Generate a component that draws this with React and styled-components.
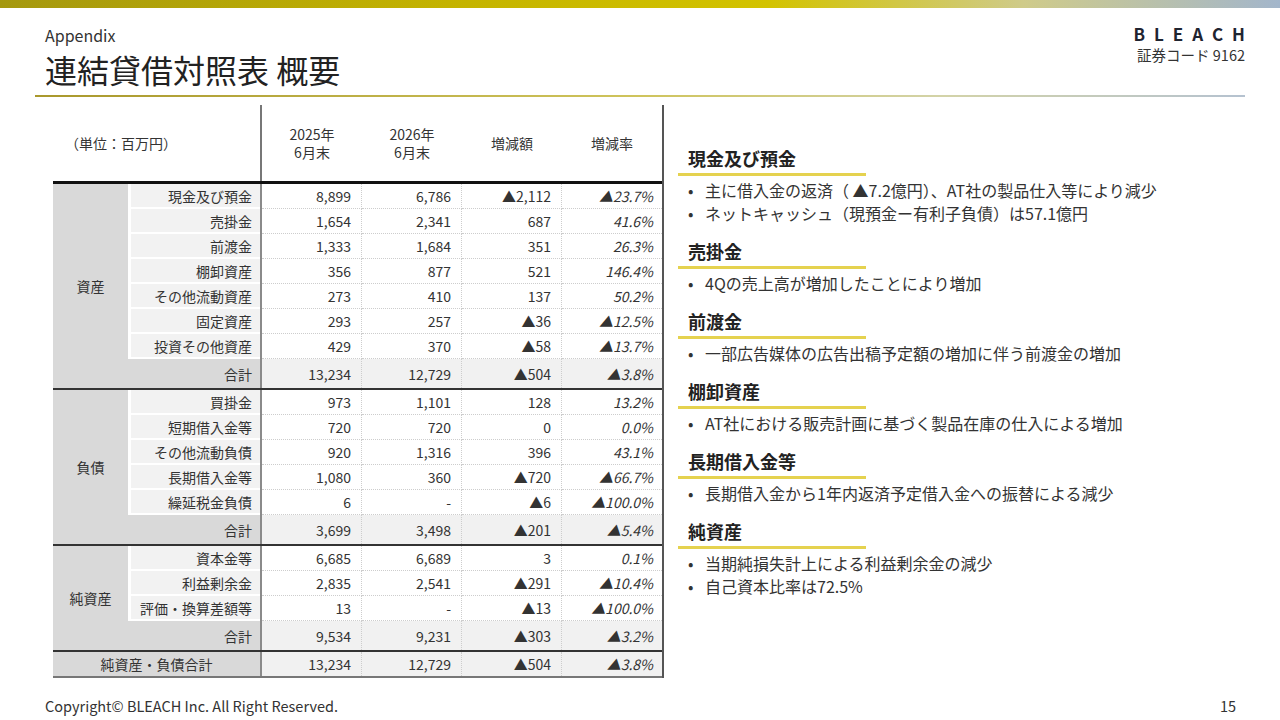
import React from 'react';
import styled, { createGlobalStyle } from 'styled-components';

const GlobalStyle = createGlobalStyle`
  * { box-sizing: border-box; }
  body {
    margin: 0;
    background: #fff;
    font-family: "Noto Sans CJK JP", "Noto Sans", sans-serif;
    color: #333;
  }
`;

const Page = styled.div`
  width: 1280px;
  height: 720px;
  display: flex;
  flex-direction: column;
  overflow: hidden;
`;

const TopBar = styled.div`
  height: 8px;
  background: linear-gradient(90deg, #a5980f 0%, #c4b300 35%, #d3c300 60%, #cfcb8a 80%, #a3b6cb 100%);
`;

const Header = styled.header`
  display: flex;
  justify-content: space-between;
  padding: 17px 35px 0 45px;
`;

const TitleBlock = styled.div`
  display: flex;
  flex-direction: column;
`;

const Kicker = styled.div`
  font-size: 16px;
  line-height: 20px;
  color: #333;
`;

const Title = styled.h1`
  margin: 4px 0 0;
  font-size: 32px;
  font-weight: 400;
  line-height: 40px;
  color: #222;
`;

const Brand = styled.div`
  display: flex;
  flex-direction: column;
  align-items: flex-end;
  margin-top: -2px;
`;

const Logo = styled.div`
  font-size: 17px;
  font-weight: 700;
  letter-spacing: 9px;
  margin-right: -9px;
  line-height: 22px;
  color: #1f2430;
`;

const Code = styled.div`
  font-size: 14.5px;
  line-height: 20px;
  color: #333;
`;

const Divider = styled.div`
  margin: 6px 35px 0;
  height: 2px;
  background: linear-gradient(90deg, #a9982c 0%, #cfc45c 50%, #d3d3a8 75%, #b5c2d0 100%);
`;

const Main = styled.main`
  flex: 1;
  display: flex;
  padding: 8px 0 0 53px;
`;

const Table = styled.div`
  width: 611px;
  align-self: flex-start;
  border-right: 2px solid #555;
`;

const cols = '75px 134px repeat(4, 100px)';

const HeadRow = styled.div`
  display: grid;
  grid-template-columns: ${cols};
  height: 79px;
  border-bottom: 3px solid #111;
`;

const UnitCell = styled.div`
  grid-column: 1 / span 2;
  display: flex;
  align-items: center;
  padding-left: 12px;
  font-size: 14px;
  border-right: 2px solid #777;
`;

const HeadCell = styled.div`
  display: flex;
  align-items: center;
  justify-content: center;
  text-align: center;
  font-size: 14px;
  line-height: 18px;
`;

const Block = styled.div`
  display: grid;
  grid-template-columns: ${cols};
  grid-template-rows: repeat(${p => p.$rows}, 25px) 29px;
  border-top: ${p => (p.$first ? 'none' : '2px solid #333')};
`;

const GroupCell = styled.div`
  grid-column: 1;
  grid-row: 1 / -1;
  background: #d9d9d9;
  display: flex;
  align-items: center;
  justify-content: center;
  font-size: 14px;
`;

const LabelCell = styled.div`
  grid-column: 2;
  padding: ${p => (p.$sum ? '0' : '0 0 2px 3px')};
  background: ${p => (p.$sum ? '#d9d9d9' : '#fff')};
  border-right: 2px solid #8a8a8a;
`;

const LabelFill = styled.div`
  height: 100%;
  display: flex;
  align-items: center;
  justify-content: flex-end;
  padding-right: 8px;
  background: ${p => (p.$sum ? '#d9d9d9' : '#f2f2f2')};
  font-size: 14px;
  white-space: nowrap;
`;

const DataCell = styled.div`
  display: flex;
  align-items: center;
  justify-content: flex-end;
  padding-right: ${p => (p.$last ? '9px' : '10px')};
  font-size: 14px;
  font-style: ${p => (p.$italic ? 'italic' : 'normal')};
  background: ${p => (p.$sum ? '#f1f1f1' : '#fff')};
  border-bottom: ${p => (p.$sum ? 'none' : '1px dotted #cdcdcd')};
  border-right: ${p => (p.$last ? 'none' : '1px dotted #cdcdcd')};
  white-space: nowrap;
`;

const TotalRow = styled.div`
  display: grid;
  grid-template-columns: ${cols};
  height: 28px;
  border-top: 2px solid #333;
  border-bottom: 2px solid #777;
`;

const TotalLabel = styled.div`
  grid-column: 1 / span 2;
  background: #d9d9d9;
  display: flex;
  align-items: center;
  justify-content: center;
  font-size: 14px;
  border-right: 2px solid #8a8a8a;
`;

const Notes = styled.section`
  margin-left: 14px;
  padding-top: 41px;
  display: flex;
  flex-direction: column;
`;

const Note = styled.div`
  margin-bottom: 14px;
`;

const NoteTitle = styled.h2`
  margin: 0;
  width: 188px;
  padding: 0 0 3px 10px;
  border-bottom: 3px solid #e5d24f;
  font-size: 18px;
  line-height: 24px;
  font-weight: 700;
  color: #222;
`;

const NoteList = styled.ul`
  list-style: none;
  margin: 3px 0 0;
  padding: 0;
`;

const NoteItem = styled.li`
  display: flex;
  font-size: 16px;
  line-height: 23px;
  color: #333;
  white-space: nowrap;
`;

const Dot = styled.span`
  width: 27px;
  padding-left: 10px;
  flex-shrink: 0;
`;

const Footer = styled.footer`
  height: 28px;
  display: flex;
  align-items: center;
  justify-content: space-between;
  padding: 0 44px 2px 45px;
  font-size: 14.5px;
  color: #333;
`;

const sections = [
  {
    group: '資産',
    rows: [
      ['現金及び預金', '8,899', '6,786', '▲2,112', '▲23.7%'],
      ['売掛金', '1,654', '2,341', '687', '41.6%'],
      ['前渡金', '1,333', '1,684', '351', '26.3%'],
      ['棚卸資産', '356', '877', '521', '146.4%'],
      ['その他流動資産', '273', '410', '137', '50.2%'],
      ['固定資産', '293', '257', '▲36', '▲12.5%'],
      ['投資その他資産', '429', '370', '▲58', '▲13.7%'],
    ],
    sum: ['13,234', '12,729', '▲504', '▲3.8%'],
  },
  {
    group: '負債',
    rows: [
      ['買掛金', '973', '1,101', '128', '13.2%'],
      ['短期借入金等', '720', '720', '0', '0.0%'],
      ['その他流動負債', '920', '1,316', '396', '43.1%'],
      ['長期借入金等', '1,080', '360', '▲720', '▲66.7%'],
      ['繰延税金負債', '6', '-', '▲6', '▲100.0%'],
    ],
    sum: ['3,699', '3,498', '▲201', '▲5.4%'],
  },
  {
    group: '純資産',
    rows: [
      ['資本金等', '6,685', '6,689', '3', '0.1%'],
      ['利益剰余金', '2,835', '2,541', '▲291', '▲10.4%'],
      ['評価・換算差額等', '13', '-', '▲13', '▲100.0%'],
    ],
    sum: ['9,534', '9,231', '▲303', '▲3.2%'],
  },
];

const notes = [
  {
    title: '現金及び預金',
    items: [
      '主に借入金の返済（ ▲7.2億円）、AT社の製品仕入等により減少',
      'ネットキャッシュ（現預金ー有利子負債）は57.1億円',
    ],
  },
  { title: '売掛金', items: ['4Qの売上高が増加したことにより増加'] },
  { title: '前渡金', items: ['一部広告媒体の広告出稿予定額の増加に伴う前渡金の増加'] },
  { title: '棚卸資産', items: ['AT社における販売計画に基づく製品在庫の仕入による増加'] },
  { title: '長期借入金等', items: ['長期借入金から1年内返済予定借入金への振替による減少'] },
  { title: '純資産', items: ['当期純損失計上による利益剰余金の減少', '自己資本比率は72.5%'] },
];

const Values = ({ values, sum }) =>
  values.map((v, i) => (
    <DataCell key={i} $sum={sum} $italic={i === 3} $last={i === 3}>
      {v}
    </DataCell>
  ));

const App = () => (
  <Page>
    <GlobalStyle />
    <TopBar />
    <Header>
      <TitleBlock>
        <Kicker>Appendix</Kicker>
        <Title>連結貸借対照表 概要</Title>
      </TitleBlock>
      <Brand>
        <Logo>BLEACH</Logo>
        <Code>証券コード 9162</Code>
      </Brand>
    </Header>
    <Divider />

    <Main>
      <Table>
        <HeadRow>
          <UnitCell>（単位：百万円）</UnitCell>
          <HeadCell>2025年<br />6月末</HeadCell>
          <HeadCell>2026年<br />6月末</HeadCell>
          <HeadCell>増減額</HeadCell>
          <HeadCell>増減率</HeadCell>
        </HeadRow>

        {sections.map((s, si) => (
          <Block key={s.group} $rows={s.rows.length} $first={si === 0}>
            <GroupCell>{s.group}</GroupCell>
            {s.rows.map(([label, ...vals]) => (
              <React.Fragment key={label}>
                <LabelCell>
                  <LabelFill>{label}</LabelFill>
                </LabelCell>
                <Values values={vals} />
              </React.Fragment>
            ))}
            <LabelCell $sum>
              <LabelFill $sum>合計</LabelFill>
            </LabelCell>
            <Values values={s.sum} sum />
          </Block>
        ))}

        <TotalRow>
          <TotalLabel>純資産・負債合計</TotalLabel>
          <Values values={['13,234', '12,729', '▲504', '▲3.8%']} sum />
        </TotalRow>
      </Table>

      <Notes>
        {notes.map(n => (
          <Note key={n.title}>
            <NoteTitle>{n.title}</NoteTitle>
            <NoteList>
              {n.items.map(t => (
                <NoteItem key={t}>
                  <Dot>•</Dot>
                  {t}
                </NoteItem>
              ))}
            </NoteList>
          </Note>
        ))}
      </Notes>
    </Main>

    <Footer>
      <span>Copyright© BLEACH Inc. All Right Reserved.</span>
      <span>15</span>
    </Footer>
  </Page>
);

export default App;
